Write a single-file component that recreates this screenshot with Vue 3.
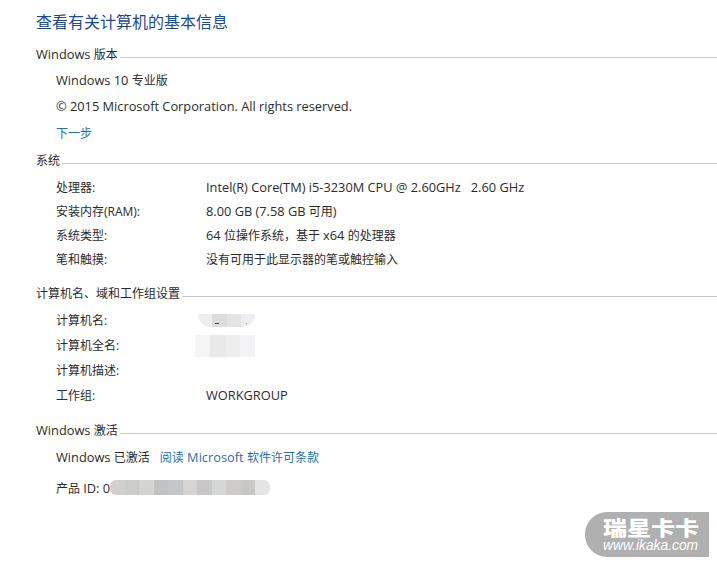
<script setup>
const systemRows = [
  { label: '处理器:', parts: ['Intel(R) Core(TM) i5-3230M CPU @ 2.60GHz   2.60 GHz'] },
  { label: '安装内存(RAM):', parts: ['8.00 GB (7.58 GB ', '可用', ')'] },
  { label: '系统类型:', parts: ['64 ', '位操作系统，基于 ', 'x64 ', '的处理器'] },
  { label: '笔和触摸:', parts: ['', '没有可用于此显示器的笔或触控输入'] },
]

const nameBlur = ['#eeeeec', '#dcdcdc', '#e4e4e2', '#eceef2']
const fullNameBlur = ['#f6f6f6', '#e9e9e9', '#eeeeee', '#f3f3f5']
const productBlur = ['#d0d0ce', '#cbcbc9', '#d4d4d2', '#c2c2c2', '#c4c6c8', '#d6d5d3', '#c8c8c8', '#d4d7d6', '#cccbc9', '#c8c8c6', '#e4e4e4']
</script>

<template>
  <div class="page">
    <h1 class="title">查看有关计算机的基本信息</h1>

    <section class="edition">
      <div class="heading"><span><span class="en">Windows </span>版本</span></div>
      <p class="line first"><span class="en">Windows 10 </span>专业版</p>
      <p class="line"><span class="en">© 2015 Microsoft Corporation. All rights reserved.</span></p>
      <p class="line next"><a class="link">下一步</a></p>
    </section>

    <section class="system">
      <div class="heading"><span>系统</span></div>
      <div class="rows">
        <div v-for="row in systemRows" :key="row.label" class="row">
          <span>{{ row.label }}</span>
          <span class="pre">
            <span v-for="(p, i) in row.parts" :key="i" :class="{ en: i % 2 === 0 }">{{ p }}</span>
          </span>
        </div>
      </div>
    </section>

    <section class="computer">
      <div class="heading"><span>计算机名、域和工作组设置</span></div>
      <div class="rows">
        <div class="row">
          <span>计算机名:</span>
          <span class="blur name-blur">
            <i v-for="c in nameBlur" :key="c" :style="{ background: c }"></i>
          </span>
        </div>
        <div class="row">
          <span>计算机全名:</span>
          <span class="blur full-blur">
            <i v-for="c in fullNameBlur" :key="c" :style="{ background: c }"></i>
          </span>
        </div>
        <div class="row">
          <span>计算机描述:</span>
          <span></span>
        </div>
        <div class="row">
          <span>工作组:</span>
          <span class="en">WORKGROUP</span>
        </div>
      </div>
    </section>

    <section class="activation">
      <div class="heading"><span><span class="en">Windows </span>激活</span></div>
      <p class="line status">
        <span class="en">Windows </span>已激活<a class="link license">阅读<span class="en"> Microsoft </span>软件许可条款</a>
      </p>
      <p class="line product">
        产品 <span class="en">ID: 0</span>
        <span class="blur product-blur">
          <i v-for="(c, i) in productBlur" :key="i" :style="{ background: c }"></i>
        </span>
      </p>
    </section>

    <div class="watermark">
      <div class="wm-name">瑞星卡卡</div>
      <div class="wm-url">www.ikaka.com</div>
    </div>
  </div>
</template>

<style>
body {
  background: #fff;
}
</style>

<style scoped>
.page {
  position: relative;
  width: 717px;
  height: 563px;
  overflow: hidden;
  box-sizing: border-box;
  padding: 13px 0 0 36px;
  background: #fff;
  color: #2b2b2b;
  font-family: "Open Sans", "Noto Sans CJK SC", sans-serif;
  font-size: 12px;
  line-height: 18px;
}

.en {
  font-size: 12.8px;
  line-height: 1;
}

.title {
  margin: 0;
  height: 18px;
  font-size: 16px;
  font-weight: 400;
  line-height: 18px;
  color: #1a4a96;
}

.heading {
  display: flex;
  align-items: center;
  gap: 2px;
  height: 18px;
}

.heading::after {
  content: '';
  flex: 1;
  height: 1px;
  margin-top: 5px;
  background: #c8c8c8;
}

.edition {
  margin-top: 15px;
}

.line {
  height: 18px;
  margin: 8px 0 0 20px;
}

.line.next {
  margin-top: 9px;
}

.line.status {
  margin-top: 9px;
}

.link {
  color: #1f6fb5;
}

.license {
  margin-left: 10px;
}

.system {
  margin-top: 9px;
}

.rows {
  margin-left: 20px;
}

.row {
  display: grid;
  grid-template-columns: 150px 1fr;
  height: 24px;
  align-items: center;
}

.system .rows {
  margin-top: 6px;
}

.pre {
  white-space: pre;
  height: 18px;
}

.computer {
  margin-top: 13px;
}

.computer .rows {
  margin-top: 5px;
}

.computer .row {
  height: 25px;
}

.activation {
  margin-top: 14px;
}

.line.product {
  position: relative;
  margin-top: 13px;
}

.blur {
  display: flex;
}

.blur i {
  flex: 1;
}

.name-blur {
  position: relative;
  width: 57px;
  height: 13px;
  margin-left: -8px;
  border-radius: 0 0 14px 14px;
  overflow: hidden;
}

/* bits of the name that show through the mosaic */
.name-blur::before,
.name-blur::after {
  content: '';
  position: absolute;
  top: 9px;
  height: 1px;
  background: #3a3f55;
}

.name-blur::before {
  left: 17px;
  width: 4px;
}

.name-blur::after {
  left: 48px;
  width: 1px;
  background: #7f93a8;
}

.full-blur {
  width: 60px;
  height: 22px;
  margin-left: -11px;
  overflow: hidden;
}

.product-blur {
  position: absolute;
  left: 54px;
  top: 0;
  width: 160px;
  height: 15px;
  border-radius: 6px;
  overflow: hidden;
}

.watermark {
  position: absolute;
  left: 585px;
  top: 512px;
  width: 124px;
  height: 45px;
  box-sizing: border-box;
  padding: 6px 0 0 18px;
  border-radius: 22px 0 0 22px;
  background: #b0b0b0;
  color: #fff;
}

.wm-name {
  font-family: "Noto Sans CJK SC", sans-serif;
  font-size: 20px;
  font-weight: 900;
  line-height: 20px;
  white-space: nowrap;
  transform: scaleX(1.2);
  transform-origin: left center;
}

.wm-url {
  font-family: "Liberation Sans", sans-serif;
  font-size: 13.8px;
  font-style: italic;
  line-height: 15px;
}
</style>
